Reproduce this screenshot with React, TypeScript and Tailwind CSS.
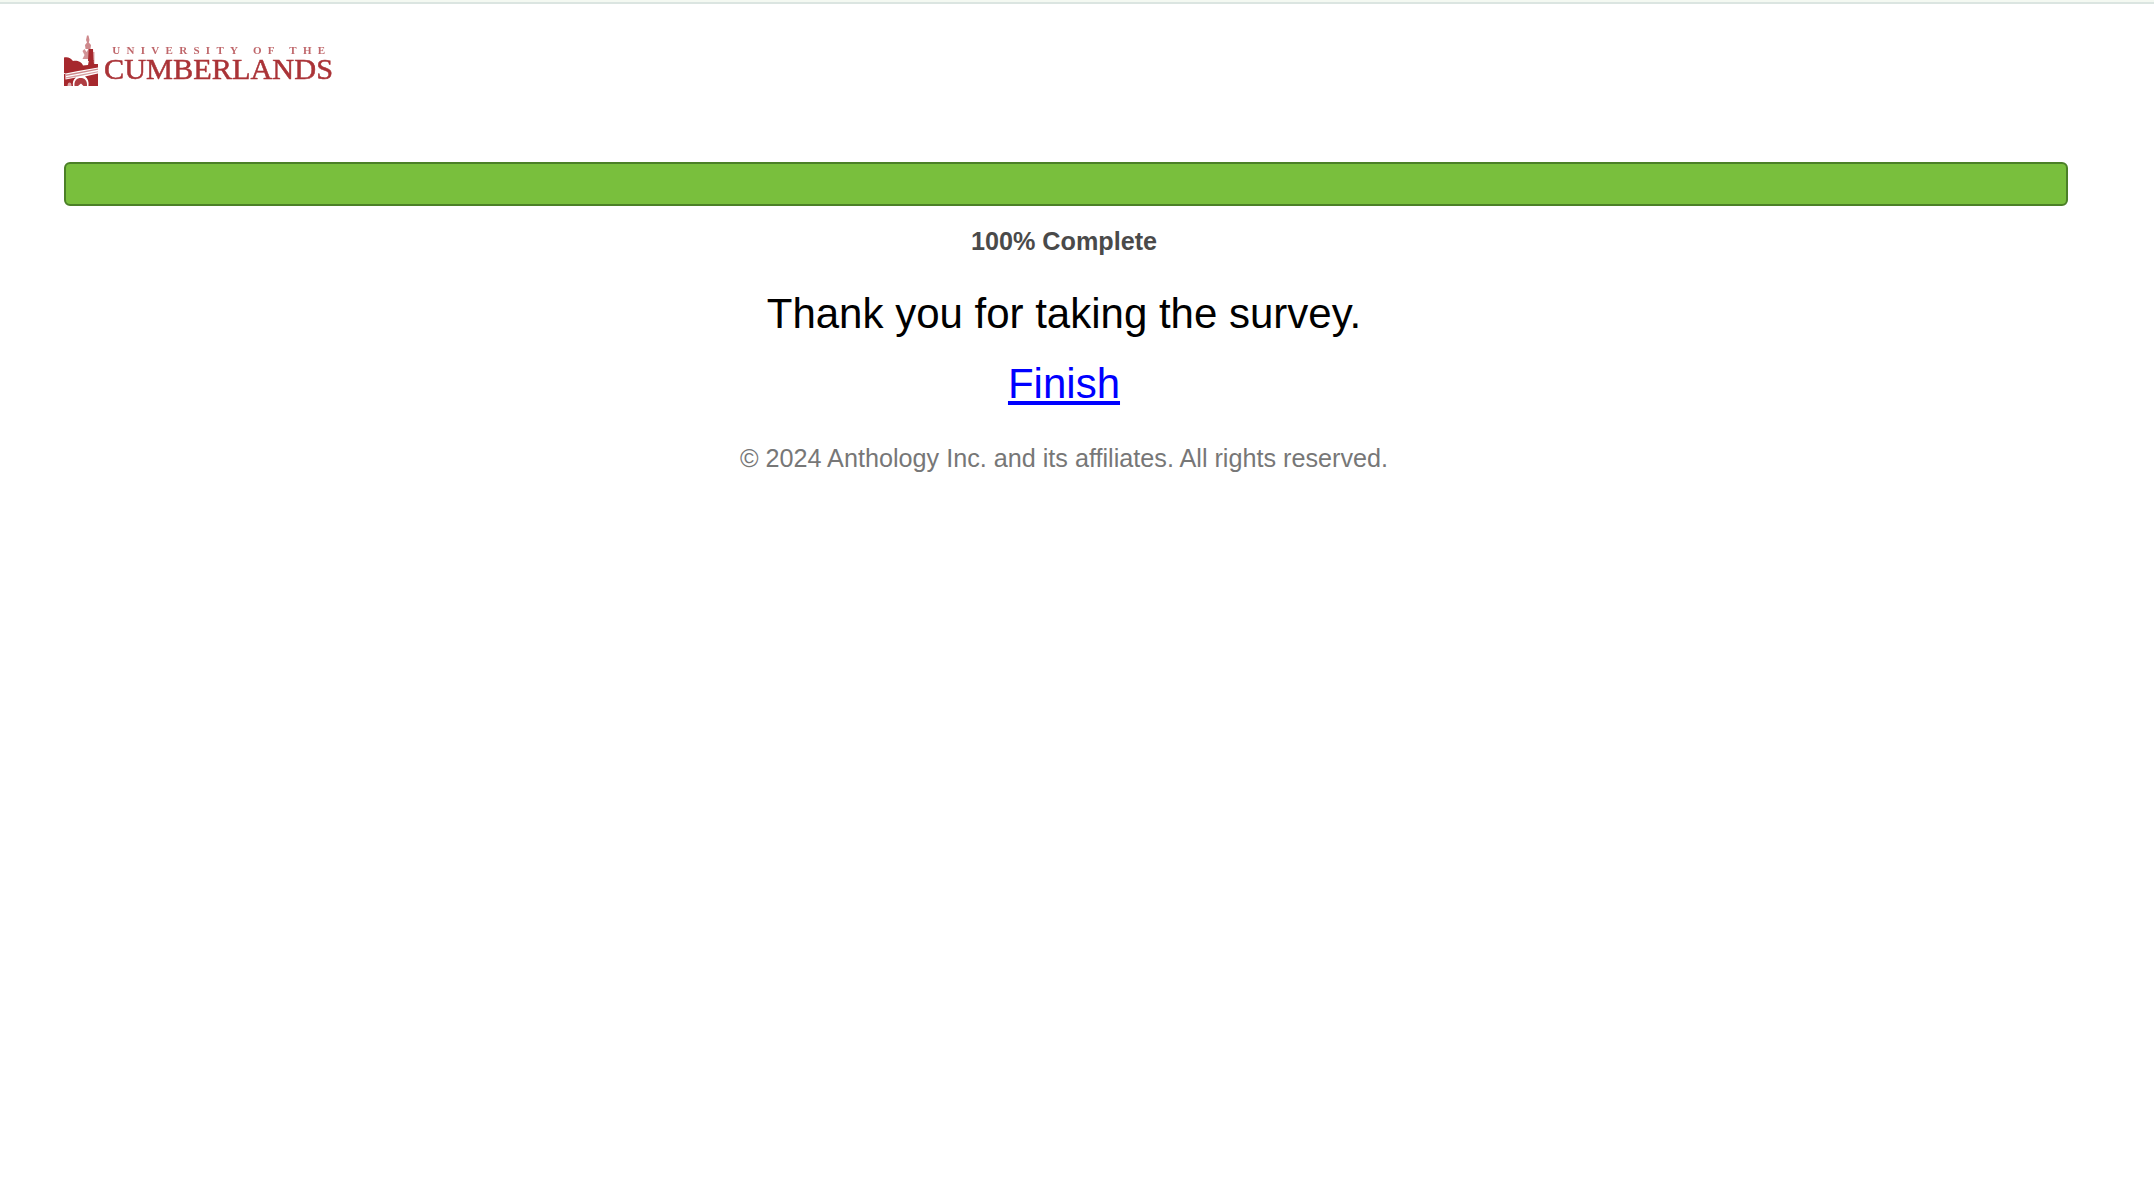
function Logo() {
  return (
    <svg
      className="block h-[52px] w-[270px] blur-[0.4px]"
      viewBox="0 0 270 52"
      role="img"
      aria-label="University of the Cumberlands"
    >
      <g fill="#a6282d">
        <path d="M0 23.500 C3 22.500 7 23.500 9 27 C13 26 18 28 19 31.500 L24 31 L25 26 H29.500 L30 30 H34 V33.500 L14 37 L1.500 39.500 L0 39 Z" />
        <path d="M2 40.500 L14 38.200 L34 34.600 V35.800 L14 39.800 L2 42 Z" opacity="0.55" />
        <path d="M2 43.200 L14 41 L34 37.200 V38.200 L14 42.500 L2 44.500 Z" opacity="0.45" />
        <path d="M0 40 H1.500 V45.500 L12 43.500 C9 45.500 8.500 48.500 9 52 H0 Z" />
        <path d="M21 42.500 L34 39.500 V52 H24.500 C25 48 24 44.500 21 42.500 Z" />
        <path d="M10.500 52 C10 46.500 13 44 16.700 44 C20.500 44 23.500 46.500 23 52 H19.500 L17 49.500 L14 52 Z" opacity="0.9" />
        <path d="M3.500 52 C3.500 49.500 4.500 48.500 5.500 48.500 C6.800 48.500 7.500 49.500 7.500 52 Z" fill="#fff" opacity="0.6" />
        <path d="M24.500 15 H29 L29.500 27 H24 Z" />
        <path d="M18.500 17 L20.500 15 L22.500 18 L24.500 15 V25 H18.500 L20.500 21 Z" opacity="0.5" />
        <path d="M23 1.500 H24.500 L25.500 6 L24.800 8.500 L27 11 L26.500 15 H21.500 L21 11 L23 8.500 L22 6 Z" opacity="0.55" />
        <path d="M29 18 H30.500 V30 H29 Z" opacity="0.4" />
      </g>
      <text
        x="48.200"
        y="19.700"
        fontFamily="Liberation Serif, serif"
        fontSize="11"
        fontWeight="700"
        fill="#bf666a"
        textLength="213"
      >
        UNIVERSITY OF THE
      </text>
      <text
        x="40"
        y="44.800"
        fontFamily="Liberation Serif, serif"
        fontSize="30"
        fill="#aa3337"
        stroke="#aa3337"
        strokeWidth="0.500"
        textLength="229"
        lengthAdjust="spacingAndGlyphs"
      >
        CUMBERLANDS
      </text>
    </svg>
  );
}

export default function App() {
  return (
    <div className="h-[1188px] overflow-hidden bg-white font-['Liberation_Sans',Arial,sans-serif]">
      <div className="h-1 border-b-2 border-[#dbe5e1] bg-[#f4f9f2]" />
      <main className="ml-16 flex w-[2000px] flex-col pt-[30px] text-center">
        <header className="h-32">
          <Logo />
        </header>
        <div className="h-11 w-[2004px] shrink-0 rounded-[6px] border-2 border-[#4b8027] bg-[#79bf3d]" />
        <p className="mt-5 text-[25.2px] leading-[30px] font-bold text-[#4a4a4a]">100% Complete</p>
        <h1 className="mt-[33px] text-[42px] leading-[50px] text-black">Thank you for taking the survey.</h1>
        <p className="mt-5 text-[42px] leading-[50px]">
          <a href="#" className="text-[#0000ff] underline decoration-[4px] underline-offset-[3px]">
            Finish
          </a>
        </p>
        <footer className="mt-[34px] text-[25.2px] leading-[30px] text-[#777777]">
          © 2024 Anthology Inc. and its affiliates. All rights reserved.
        </footer>
      </main>
    </div>
  );
}
